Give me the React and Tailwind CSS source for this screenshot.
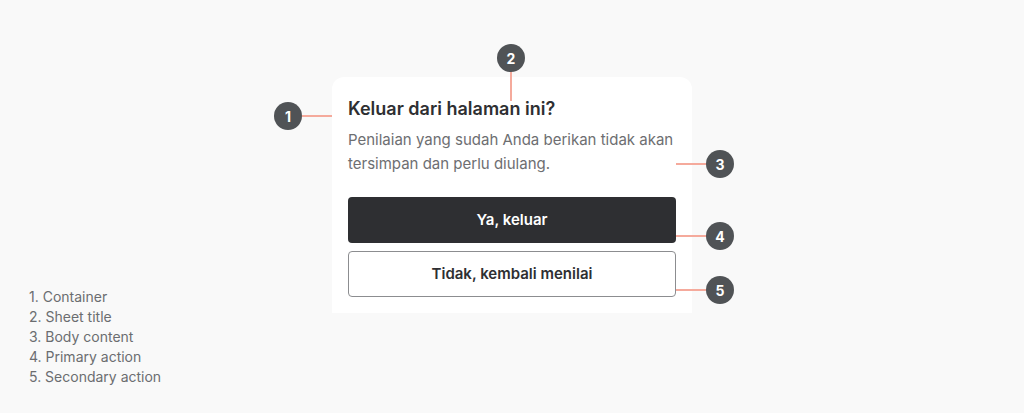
import React from "react";

function Badge({ n, className }) {
  return (
    <div
      className={
        "absolute flex h-[28px] w-[28px] items-center justify-center rounded-full bg-[#505356] text-[14px] font-bold text-white " +
        className
      }
    >
      {n}
    </div>
  );
}

export default function App() {
  return (
    <div
      className="flex h-[413px] w-[1024px] items-start bg-[#f9f9f9]"
      style={{ fontFamily: "Inter, 'Noto Sans', sans-serif" }}
    >
      <div className="flex h-full w-[332px] flex-col justify-end pb-[26px] pl-[29px] text-[14px] leading-[20px] text-[#6b6d70]">
        <div>1. Container</div>
        <div>2. Sheet title</div>
        <div>3. Body content</div>
        <div>4. Primary action</div>
        <div>5. Secondary action</div>
      </div>
      <div className="relative mt-[77px] w-[360px]">
        <div className="flex flex-col rounded-t-[12px] bg-white px-4 pt-5 pb-4">
          <h1 className="text-[18px] font-semibold leading-[24px] text-[#2e2f32]">
            Keluar dari halaman ini?
          </h1>
          <p className="mt-[7px] text-[15px] leading-[24px] text-[#6d6e71]">
            Penilaian yang sudah Anda berikan tidak akan tersimpan dan perlu diulang.
          </p>
          <div className="mt-[21px] flex flex-col gap-2">
            <button className="h-[46px] rounded-[4px] bg-[#2e2f32] text-[15px] font-semibold text-white">
              Ya, keluar
            </button>
            <button className="h-[46px] rounded-[4px] border border-[#8c8d90] bg-white text-[15px] font-semibold text-[#2e2f32]">
              Tidak, kembali menilai
            </button>
          </div>
        </div>

        {/* callout lines */}
        <div className="absolute left-[-30px] top-[38px] h-[2px] w-[30px] bg-[#f5aa9c]" />
        <div className="absolute left-[178px] top-[-6px] h-[30px] w-[2px] bg-[#f5aa9c]" />
        <div className="absolute left-[344px] top-[86px] h-[2px] w-[30px] bg-[#f5aa9c]" />
        <div className="absolute left-[344px] top-[158px] h-[2px] w-[30px] bg-[#f5aa9c]" />
        <div className="absolute left-[344px] top-[212px] h-[2px] w-[30px] bg-[#f5aa9c]" />

        <Badge n="1" className="left-[-58px] top-[25px]" />
        <Badge n="2" className="left-[165px] top-[-33px]" />
        <Badge n="3" className="left-[374px] top-[73px]" />
        <Badge n="4" className="left-[374px] top-[145px]" />
        <Badge n="5" className="left-[374px] top-[199px]" />
      </div>
    </div>
  );
}
